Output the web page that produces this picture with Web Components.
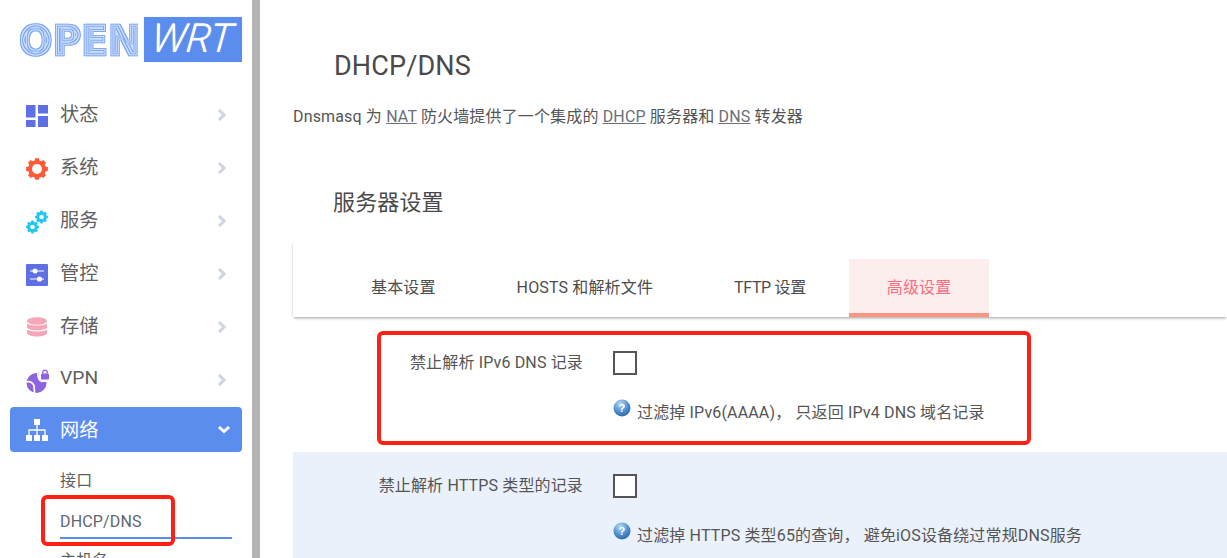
<!DOCTYPE html>
<html>
<head>
<meta charset="utf-8">
<title>DHCP/DNS</title>
<style>
html, body { margin: 0; height: 558px; overflow: hidden; background: #fff; }
body {
  position: relative;
  display: flex;
  font-family: "Roboto", "Noto Sans CJK SC", sans-serif;
  letter-spacing: .15px;
  color: #4d4d4d;
}
u { color: #6b7078; }
</style>
</head>
<body>
<op-sidebar>
  <op-logo></op-logo>
  <op-nav-item icon="status">状态</op-nav-item>
  <op-nav-item icon="system">系统</op-nav-item>
  <op-nav-item icon="services">服务</op-nav-item>
  <op-nav-item icon="control">管控</op-nav-item>
  <op-nav-item icon="storage">存储</op-nav-item>
  <op-nav-item icon="vpn">VPN</op-nav-item>
  <op-nav-item icon="network" active>网络</op-nav-item>
  <op-sub-item>接口</op-sub-item>
  <op-sub-item active>DHCP/DNS</op-sub-item>
  <op-sub-item>主机名</op-sub-item>
</op-sidebar>

<op-main>
  <span slot="title">DHCP/DNS</span>
  <span slot="desc">Dnsmasq 为 <u>NAT</u> 防火墙提供了一个集成的 <u>DHCP</u> 服务器和 <u>DNS</u> 转发器</span>
  <span slot="section">服务器设置</span>
  <op-tabs slot="tabs">
    <op-tab>基本设置</op-tab>
    <op-tab>HOSTS 和解析文件</op-tab>
    <op-tab style="letter-spacing:-.35px">TFTP 设置</op-tab>
    <op-tab active>高级设置</op-tab>
  </op-tabs>
  <op-option slot="options" label="禁止解析 IPv6 DNS 记录">过滤掉 IPv6(AAAA)， 只返回 IPv4 DNS 域名记录</op-option>
  <op-option slot="options" shaded label="禁止解析 HTTPS 类型的记录">过滤掉 HTTPS 类型65的查询， 避免iOS设备绕过常规DNS服务</op-option>
</op-main>

<op-mark style="left:377px;top:331px;width:654px;height:114px"></op-mark>
<op-mark style="left:41px;top:495px;width:134px;height:51px"></op-mark>

<script>
//============= ICONS =========================//
const gearPath = (cx, cy, r, teeth) => {
  let d = '';
  for (let i = 0; i < teeth; i++) {
    const a = i * 2 * Math.PI / teeth, w = Math.PI / teeth * 0.55;
    const pts = [[r * 0.8, a - w * 1.3], [r, a - w * 0.8], [r, a + w * 0.8], [r * 0.8, a + w * 1.3]];
    pts.forEach((p, n) => {
      d += (i === 0 && n === 0 ? 'M' : 'L') + (cx + p[0] * Math.cos(p[1])).toFixed(2) + ' ' + (cy + p[0] * Math.sin(p[1])).toFixed(2);
    });
  }
  return d + 'Z';
};

const ICONS = {
  status: `<g fill="#5f6fe6"><rect x="0" y="0" width="9.5" height="12.5"/><rect x="12" y="0" width="10" height="8.5"/><rect x="0" y="15" width="9.5" height="7"/><rect x="12" y="11" width="10" height="11"/></g>`,
  system: `<path fill="#ff5a36" fill-rule="evenodd" d="${gearPath(11, 11, 11, 8)}M11 6a5 5 0 1 0 0 10a5 5 0 0 0 0-10Z"/>`,
  services: `<g fill="#1cc8f2" fill-rule="evenodd"><path d="${gearPath(15.5, 6, 6.5, 8)}M15.5 3.7a2.3 2.3 0 1 0 0 4.6a2.3 2.3 0 0 0 0-4.6Z"/><path d="${gearPath(6.5, 16, 6.5, 8)}M6.5 13.7a2.3 2.3 0 1 0 0 4.6a2.3 2.3 0 0 0 0-4.6Z"/></g>`,
  control: `<rect width="22" height="22" rx="1" fill="#5f6fe6"/><g stroke="#fff" stroke-width="1.2" fill="#fff"><path d="M4 7H18M4 15H18"/><circle cx="9" cy="7" r="2"/><circle cx="13.5" cy="15" r="2"/></g>`,
  storage: `<g fill="#f5a6b8"><ellipse cx="11" cy="4" rx="10" ry="3.8"/><path d="M1 6.5c2 2.6 18 2.6 20 0v3.8c0 4-20 4-20 0Z"/><path d="M1 12.5c2 2.6 18 2.6 20 0v3.2c0 5-20 5-20 0Z"/></g>`,
  vpn: `<circle cx="10.5" cy="13" r="10" fill="#8e63e0"/><path d="M.5 12C4 11 6.500 13 8 15.500L8.500 23M12 3C11.500 7 13 10 16 11.500L21 11" fill="none" stroke="#fff" stroke-width="1.7"/><rect x="13" y="1" width="11" height="10" fill="#fff"/><rect x="15" y="3.500" width="8" height="6" rx="1" fill="#8e63e0"/><path d="M16.700 3.500V2.400a2.300 2.300 0 0 1 4.600 0V3.500" fill="none" stroke="#8e63e0" stroke-width="1.300"/>`,
  network: `<g fill="#fff"><rect x="8" y="0" width="6" height="6"/><rect x="0" y="16" width="6" height="6"/><rect x="8" y="16" width="6" height="6"/><rect x="16" y="16" width="6" height="6"/></g><path d="M11 6V16M3 16V11H19V16" fill="none" stroke="#fff" stroke-width="1.3"/>`
};

//============= SIDEBAR =========================//
class OpSidebar extends HTMLElement {
  constructor() {
    super();
    this.attachShadow({ mode: 'open' }).innerHTML = `
      <style>
        :host { display: flex; flex-direction: column; flex: none; box-sizing: border-box; width: 260px; height: 558px; overflow: hidden; padding: 0 10px; background: #fff; border-right: 8px solid #b3b3b3; }
      </style>
      <slot></slot>`;
  }
}
customElements.define('op-sidebar', OpSidebar);

class OpLogo extends HTMLElement {
  constructor() {
    super();
    this.attachShadow({ mode: 'open' }).innerHTML = `
      <style>
        :host { display: flex; flex: none; align-items: flex-start; height: 62px; margin: 17px 0 13px 8px; letter-spacing: 0; }
        svg { display: block; flex: none; }
        .open { font: 700 41px "DejaVu Sans", sans-serif; fill: #7fa8f2; stroke: #7fa8f2; stroke-width: 2.4; stroke-linejoin: miter; }
        .wrt {
          width: 98px; height: 45px; margin-left: 6px; background: #5b8def;
          color: #fff; text-align: center;
          font: italic 300 40px/43px "Roboto", sans-serif;
          box-shadow: 0 0 1px #c5d8fa;
        }
        .wrt span { display: inline-block; transform: skewX(-6deg); text-shadow: 0 0 1px #fff; }
      </style>
      <svg width="120" height="60" viewBox="0 0 125 60" preserveAspectRatio="none">
        <defs>
          <filter id="rings" x="-2%" y="-2%" width="104%" height="104%" color-interpolation-filters="sRGB">
            <feMorphology in="SourceGraphic" operator="erode" radius="1" result="e1"/>
            <feMorphology in="SourceGraphic" operator="erode" radius="2" result="e2"/>
            <feMorphology in="SourceGraphic" operator="erode" radius="3" result="e3"/>
            <feMorphology in="SourceGraphic" operator="erode" radius="4" result="e4"/>
            <feMorphology in="SourceGraphic" operator="erode" radius="5" result="e5"/>
            <feFlood flood-color="#d3e2fc"/>
            <feComposite in2="SourceAlpha" operator="in" result="under"/>
            <feComposite in="SourceGraphic" in2="e1" operator="out" result="r1"/>
            <feComposite in="e2" in2="e3" operator="out" result="r2"/>
            <feComposite in="e4" in2="e5" operator="out" result="r3"/>
            <feMerge result="all"><feMergeNode in="under"/><feMergeNode in="r1"/><feMergeNode in="r2"/><feMergeNode in="r3"/></feMerge>
            <feGaussianBlur in="all" stdDeviation=".35"/>
          </filter>
        </defs>
        <text class="open" x="1" y="38" filter="url(#rings)">OPEN</text>
      </svg>
      <div class="wrt"><span>WRT</span></div>`;
  }
}
customElements.define('op-logo', OpLogo);

class OpNavItem extends HTMLElement {
  constructor() {
    super();
    const active = this.hasAttribute('active');
    const chevron = active
      ? '<path d="M1 3l5 4.5 5-4.5" fill="none" stroke="#fff" stroke-width="3"/>'
      : '<path d="M3 1l5 5-5 5" fill="none" stroke="#cfd6df" stroke-width="3"/>';
    this.attachShadow({ mode: 'open' }).innerHTML = `
      <style>
        :host { display: flex; align-items: center; flex: none; height: 45px; margin-bottom: 8px; padding: 0 14px 0 16px; border-radius: 4px; font-size: 19.2px; color: #5f5f5f; }
        :host([active]) { background: #5b8def; color: #fff; margin: -3px 0 7px; padding-right: 12px; }
        .ic { width: 22px; height: 22px; flex: none; margin: 2px 12px 0 0; overflow: visible; }
        :host([active]) .ic { margin-top: 0; }
        .tx { flex: 1; margin-top: -4px; }
        :host([active]) .tx { margin-top: -2px; }
        .ch { width: 12px; height: 12px; flex: none; }
      </style>
      <svg class="ic" viewBox="0 0 22 22">${ICONS[this.getAttribute('icon')] || ''}</svg>
      <span class="tx"><slot></slot></span>
      <svg class="ch" viewBox="0 0 12 12">${chevron}</svg>`;
  }
}
customElements.define('op-nav-item', OpNavItem);

class OpSubItem extends HTMLElement {
  constructor() {
    super();
    this.attachShadow({ mode: 'open' }).innerHTML = `
      <style>
        :host { display: flex; align-items: center; flex: none; box-sizing: border-box; height: 40px; margin: 0 10px 0 50px; font-size: 16px; color: #5f5f5f; }
        :host([active]) { border-bottom: 2px solid #5b8def; padding-top: 6px; color: #5f6673; }
      </style>
      <slot></slot>`;
  }
}
customElements.define('op-sub-item', OpSubItem);

//============= MAIN =========================//
class OpMain extends HTMLElement {
  constructor() {
    super();
    this.attachShadow({ mode: 'open' }).innerHTML = `
      <style>
        :host { display: block; flex: 1; min-width: 0; height: 558px; overflow: hidden; padding-left: 33px; }
        .title { font-size: 27px; line-height: 32px; color: #4a4a4a; margin: 50px 0 0 41px; }
        .desc { font-size: 16px; line-height: 20px; color: #555; margin-top: 25px; }
        .section { font-size: 22px; line-height: 30px; color: #4a4a4a; margin: 61px 0 0 40px; }
        .tabs { margin-top: 24px; }
      </style>
      <div class="title"><slot name="title"></slot></div>
      <div class="desc"><slot name="desc"></slot></div>
      <div class="section"><slot name="section"></slot></div>
      <div class="tabs"><slot name="tabs"></slot></div>
      <slot name="options"></slot>`;
  }
}
customElements.define('op-main', OpMain);

class OpTabs extends HTMLElement {
  constructor() {
    super();
    this.attachShadow({ mode: 'open' }).innerHTML = `
      <style>
        :host { display: flex; gap: 5px; height: 58px; padding: 17px 0 0 40px; background: #fff; box-shadow: 0 2px 3px -1px rgba(0,0,0,.38), -1px 0 2px -1px rgba(0,0,0,.12); margin-bottom: 12px; }
      </style>
      <slot></slot>`;
  }
}
customElements.define('op-tabs', OpTabs);

class OpTab extends HTMLElement {
  constructor() {
    super();
    this.attachShadow({ mode: 'open' }).innerHTML = `
      <style>
        :host { display: flex; align-items: center; box-sizing: border-box; height: 58px; padding: 0 38px 4px; font-size: 16px; color: #4d4d4d; white-space: nowrap; }
        :host([active]) { background: #fdeeee; border-bottom: 4px solid #ff9485; padding-bottom: 0; color: #fb6d7d; }
      </style>
      <slot></slot>`;
  }
}
customElements.define('op-tab', OpTab);

class OpOption extends HTMLElement {
  constructor() {
    super();
    this.attachShadow({ mode: 'open' }).innerHTML = `
      <style>
        :host { display: grid; grid-template-columns: 290px 1fr; column-gap: 30px; height: 123px; box-sizing: border-box; padding-top: 22px; }
        :host([shaded]) { background: #eaf1fb; }
        .label { font-size: 16px; line-height: 24px; text-align: right; color: #555; }
        .box { box-sizing: border-box; width: 24px; height: 24px; border: 2px solid #555; background: #fff; }
        .help { display: flex; align-items: flex-start; margin-top: 26px; font-size: 16px; line-height: 24px; color: #555; white-space: nowrap; }
        op-help { margin: -2px 6px 0 0; }
      </style>
      <div class="label">${this.getAttribute('label')}</div>
      <div>
        <div class="box"></div>
        <div class="help"><op-help></op-help><span><slot></slot></span></div>
      </div>`;
  }
}
customElements.define('op-option', OpOption);

class OpHelp extends HTMLElement {
  constructor() {
    super();
    this.attachShadow({ mode: 'open' }).innerHTML = `
      <style>
        :host { display: inline-block; flex: none; width: 18px; height: 18px; }
        svg { display: block; }
        text { font: 700 11px "Liberation Sans", sans-serif; fill: #fff; }
      </style>
      <svg width="18" height="18" viewBox="0 0 18 18">
        <defs><radialGradient id="g" cx=".4" cy=".25" r=".85"><stop offset="0" stop-color="#b5daf5"/><stop offset=".55" stop-color="#4d8fd0"/><stop offset="1" stop-color="#255f9e"/></radialGradient></defs>
        <circle cx="9" cy="9" r="8.5" fill="url(#g)"/>
        <text x="9" y="13" text-anchor="middle">?</text>
      </svg>`;
  }
}
customElements.define('op-help', OpHelp);

// red rectangles someone drew over the screenshot
class OpMark extends HTMLElement {
  constructor() {
    super();
    this.attachShadow({ mode: 'open' }).innerHTML = `
      <style>
        :host { position: absolute; box-sizing: border-box; border: 4px solid #ff2015; border-radius: 6px; pointer-events: none; }
      </style>`;
  }
}
customElements.define('op-mark', OpMark);
</script>
</body>
</html>
